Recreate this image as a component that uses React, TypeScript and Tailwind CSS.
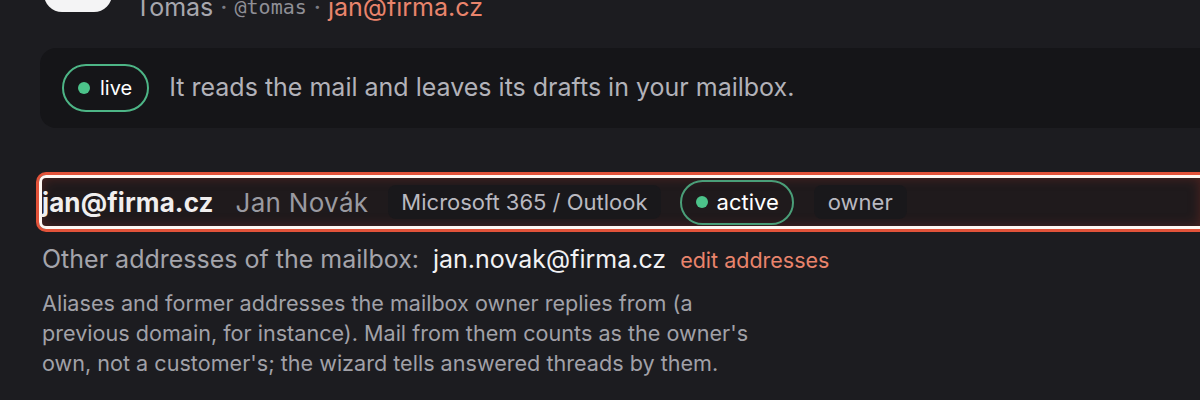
export default function App() {
  return (
    <div className="h-[400px] w-[1200px] overflow-hidden bg-[#1c1c20] font-['Inter',sans-serif]">
      <div className="pl-[40px]">
        <div className="-mt-[58px] flex items-end gap-[23px]">
          <div className="ml-[4px] h-[70px] w-[68px] rounded-[18px] bg-[#f4f4f5]" />
          <div className="-mb-[10px] flex items-center gap-[7px] text-[25px] leading-[30px] text-[#a7a7ae]">
            <span>Tomas</span>
            <span className="text-[#7c7c84]">·</span>
            <span className="font-['DejaVu_Sans_Mono',monospace] text-[20px] text-[#8f8f96]">@tomas</span>
            <span className="text-[#7c7c84]">·</span>
            <span className="text-[#e9846c]">jan@firma.cz</span>
          </div>
        </div>

        <div className="mt-[36px] flex h-[80px] items-center gap-[20px] rounded-l-[16px] bg-[#151518] pl-[22px]">
          <span className="flex h-[48px] items-center gap-[10px] rounded-full border-2 border-[#4db586] pl-[14px] pr-[15px] text-[20px] text-white">
            <span className="h-[12px] w-[12px] rounded-full bg-[#4cc38a]" />
            live
          </span>
          <span className="text-[25px] text-[#b2b2b9]">It reads the mail and leaves its drafts in your mailbox.</span>
        </div>
      </div>

      <div className="mt-[44px] ml-[36px] flex h-[60px] items-center rounded-l-[10px] border-[3px] border-r-0 border-[#e2533a] bg-[#1f1a1c]">
        <div className="flex h-full w-full items-center rounded-l-[7px] border-[3px] border-r-0 border-[#fff7f2] shadow-[inset_0_0_12px_rgba(150,50,40,0.4)]">
          <span className="text-[26px] font-bold tracking-[0.1px] text-[#f0eeee]">jan@firma.cz</span>
          <span className="ml-[22px] text-[26px] tracking-[0.3px] text-[#9a9aa1]">Jan Novák</span>
          <span className="ml-[20px] flex h-[34px] items-center rounded-[8px] bg-[#19181b] px-[13px] text-[22px] text-[#b9b9c0]">Microsoft 365 / Outlook</span>
          <span className="ml-[19px] flex h-[45px] items-center gap-[9px] rounded-full border-2 border-[#4a9e78] pl-[14px] pr-[13px] text-[22px] text-white">
            <span className="h-[12px] w-[12px] rounded-full bg-[#4cc38a]" />
            active
          </span>
          <span className="ml-[20px] flex h-[34px] items-center rounded-[8px] bg-[#19181b] px-[14px] text-[22px] text-[#b9b9c0]">owner</span>
        </div>
      </div>

      <div className="ml-[42px] mt-[9px] flex items-baseline">
        <span className="text-[25px] text-[#a4a4ab]">Other addresses of the mailbox:</span>
        <span className="ml-[14px] text-[25px] text-[#f2f2f4]">jan.novak@firma.cz</span>
        <span className="ml-[14px] text-[21.5px] text-[#e9846c]">edit addresses</span>
      </div>
      <p className="ml-[42px] mt-[9px] w-[735px] text-[21.6px] leading-[30px] text-[#a1a1a8]">
        Aliases and former addresses the mailbox owner replies from (a previous domain, for instance). Mail from them counts as the owner's own, not a customer's; the wizard tells answered threads by them.
      </p>
    </div>
  );
}
